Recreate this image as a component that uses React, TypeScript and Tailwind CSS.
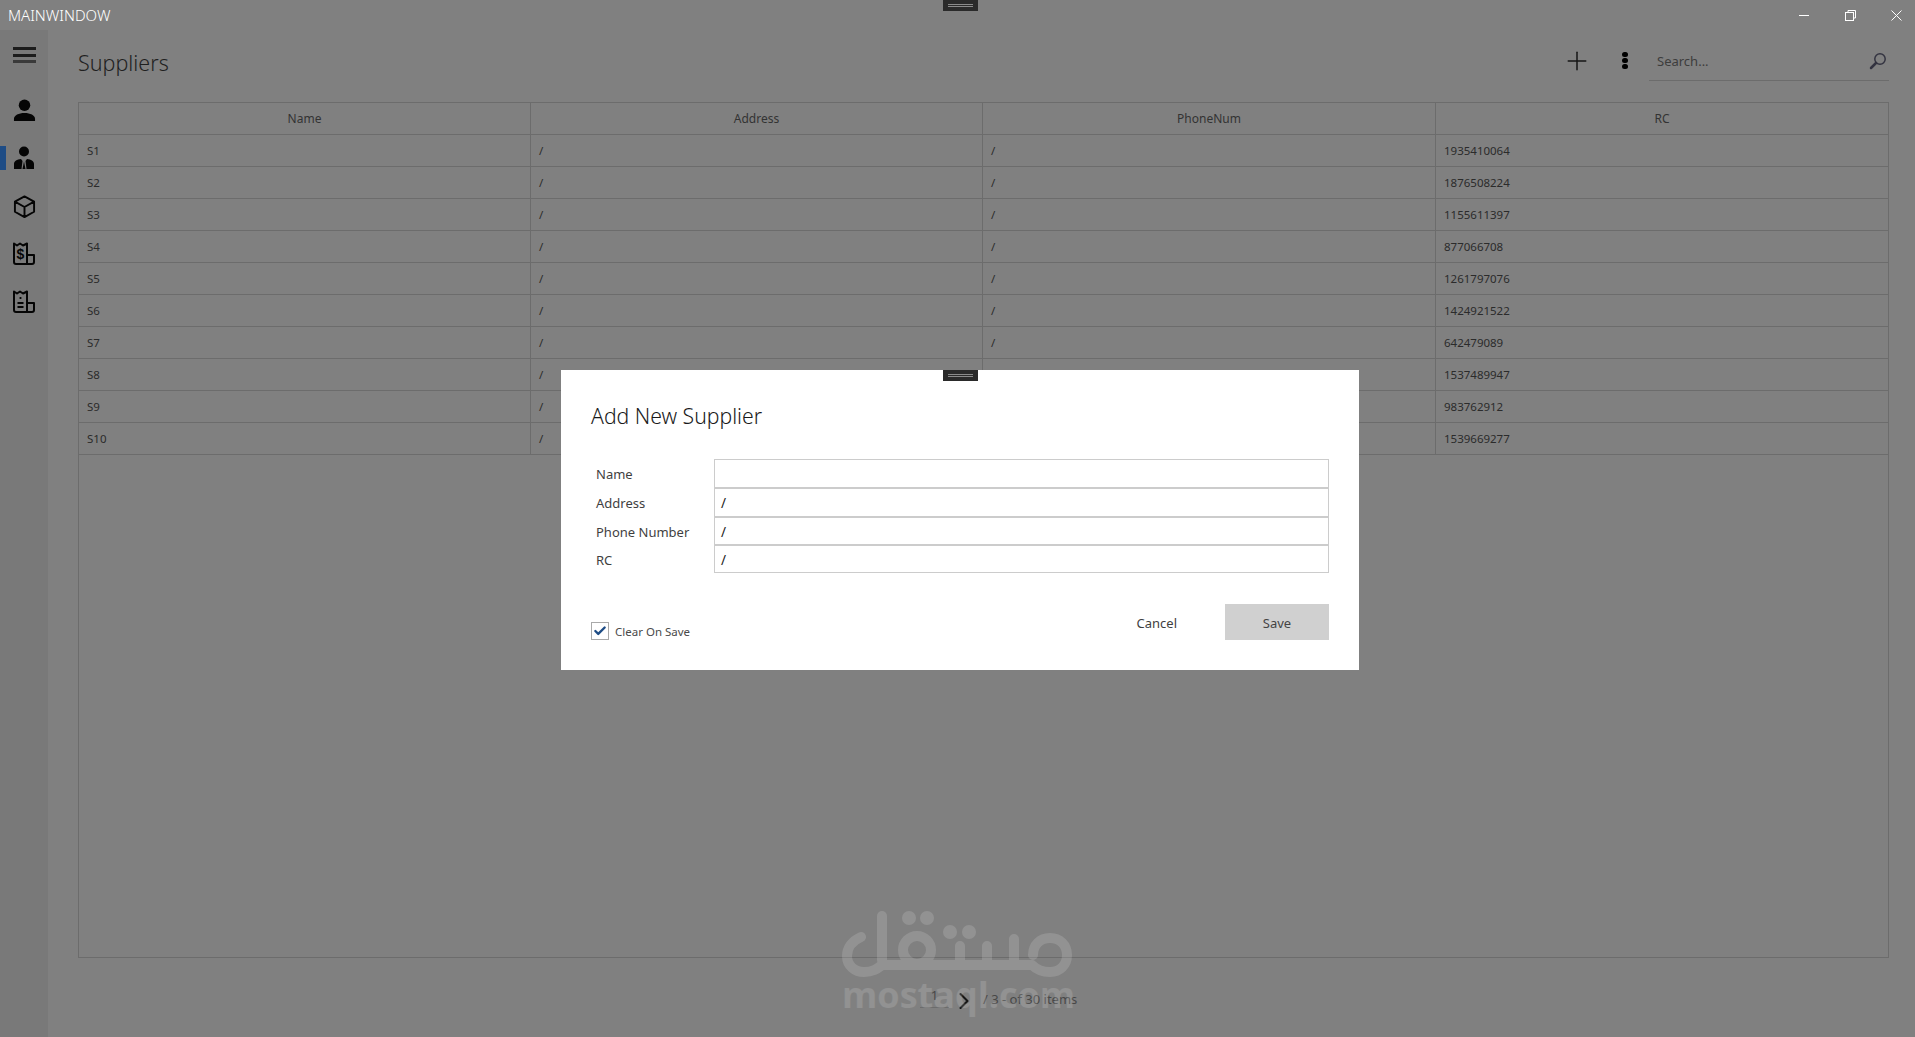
import { Check, ChevronRight, Plus } from 'lucide-react';

const suppliers = [
  { name: 'S1', rc: '1935410064' },
  { name: 'S2', rc: '1876508224' },
  { name: 'S3', rc: '1155611397' },
  { name: 'S4', rc: '877066708' },
  { name: 'S5', rc: '1261797076' },
  { name: 'S6', rc: '1424921522' },
  { name: 'S7', rc: '642479089' },
  { name: 'S8', rc: '1537489947' },
  { name: 'S9', rc: '983762912' },
  { name: 'S10', rc: '1539669277' },
];

const fields = [
  { label: 'Name', value: '', height: 'h-[29px]', offset: 'pt-[2px]' },
  { label: 'Address', value: '/', height: 'h-[29px]', offset: 'pt-[2px]' },
  { label: 'Phone Number', value: '/', height: 'h-[28px]', offset: 'pt-[3px]' },
  { label: 'RC', value: '/', height: 'h-[28px]', offset: 'pt-[3px]' },
];

function DragHandle({ className }: { className: string }) {
  return (
    <div className={`absolute left-[943px] flex h-[11px] w-[35px] flex-col items-center justify-center gap-[1px] bg-[#2a2a2a] ${className}`}>
      <div className="h-[1px] w-[25px] bg-[#8a8a8a]" />
      <div className="h-[1px] w-[25px] bg-[#8a8a8a]" />
    </div>
  );
}

function SuitIcon() {
  return (
    <svg width="22" height="24" viewBox="0 0 22 24" fill="#050505">
      <circle cx="11" cy="5.500" r="5" />
      <path d="M1 23v-5c0-3 3-4.500 7-5l1.500 2-1 8H1zM21 23v-5c0-3-3-4.500-7-5l-1.500 2 1 8H21zM11 15.500l1.500 7.500h-3z" />
    </svg>
  );
}

function ReceiptIcon({ dollar }: { dollar?: boolean }) {
  return (
    <svg width="24" height="24" viewBox="0 0 24 24" fill="none" stroke="#050505" strokeWidth="2">
      <path d="M2 1.500l3 2 3-2 3 2 4-2V22H4a2 2 0 0 1-2-2zM15 13h7v7a2 2 0 0 1-2 2h-5" strokeLinejoin="round" />
      {dollar ? (
        <text x="8.500" y="17" textAnchor="middle" fontSize="14" fontWeight="700" fill="#050505" stroke="none" fontFamily="Liberation Sans, sans-serif">$</text>
      ) : (
        <g strokeWidth="1.800">
          <path d="M8.500 7v2M5.500 13h6M5.500 17h6" />
        </g>
      )}
    </svg>
  );
}

function Sidebar() {
  return (
    <aside className="flex w-[48px] flex-none flex-col items-center bg-[#797979] pt-[17px]">
      <div className="flex h-[16px] w-[23px] flex-col justify-between">
        <div className="h-[3px] bg-[#1c1c1c]" />
        <div className="h-[3px] bg-[#1c1c1c]" />
        <div className="h-[3px] bg-[#3a3a3a]" />
      </div>
      <div className="mt-[34px] flex h-[26px] items-center">
        <svg width="23" height="23" viewBox="0 0 24 24" fill="#050505">
          <circle cx="12" cy="6.500" r="6" />
          <path d="M1 23v-2.500C1 17 6 14.500 12 14.500S23 17 23 20.500V23z" />
        </svg>
      </div>
      <div className="relative mt-[22px] flex h-[26px] w-full items-center justify-center">
        <div className="absolute left-0 top-[1px] h-[24px] w-[6px] bg-[#1e4c85]" />
        <SuitIcon />
      </div>
      <div className="mt-[22px] flex h-[26px] items-center">
        <svg width="23" height="23" viewBox="0 0 24 24" fill="none" stroke="#050505" strokeWidth="2" strokeLinejoin="round">
          <path d="M12 1.500l10 5.500v10.500l-10 5.500-10-5.500V7zM2 7l10 5.500L22 7M12 12.500V23" />
        </svg>
      </div>
      <div className="mt-[22px] flex h-[26px] items-center">
        <ReceiptIcon dollar />
      </div>
      <div className="mt-[22px] flex h-[26px] items-center">
        <ReceiptIcon />
      </div>
    </aside>
  );
}

function Toolbar() {
  return (
    <div className="flex h-[72px] items-start">
      <h1 className="mt-[15px] text-[21.500px] leading-[36px] font-light text-[#1f1f1f]">Suppliers</h1>
      <div className="ml-auto flex items-start">
        <Plus size={30} strokeWidth={1.200} className="mt-[16px] text-[#161616]" />
        <div className="ml-[30px] mr-[21px] mt-[22px] flex w-[6px] flex-col gap-[1px]">
          <div className="h-[5px] w-[6px] rounded-full bg-black" />
          <div className="h-[5px] w-[6px] rounded-full bg-black" />
          <div className="h-[5px] w-[6px] rounded-full bg-black" />
        </div>
        <div className="flex h-[51px] w-[240px] items-start justify-between border-b border-[#6c6c6c] pl-[8px] pr-[2px] pt-[21px]">
          <span className="text-[13px] leading-[20px] text-[#3d3d3d]">Search...</span>
          <svg width="18" height="18" viewBox="0 0 18 18" fill="none" className="mt-[1px]">
            <circle cx="11" cy="7" r="5.200" stroke="#333340" strokeWidth="1.500" />
            <path d="M7 11l-5 5" stroke="#333340" strokeWidth="2.500" strokeLinecap="round" />
          </svg>
        </div>
      </div>
    </div>
  );
}

function SuppliersTable() {
  return (
    <div className="min-h-0 flex-1 border border-[#6c6c6c]">
      <div className="grid h-[32px] grid-cols-[452px_452px_453px_1fr] border-b border-[#6c6c6c] text-center text-[12px] leading-[32px] text-[#333333]">
        <div className="border-r border-[#6c6c6c]">Name</div>
        <div className="border-r border-[#6c6c6c]">Address</div>
        <div className="border-r border-[#6c6c6c]">PhoneNum</div>
        <div>RC</div>
      </div>
      {suppliers.map((s) => (
        <div key={s.name} className="grid h-[32px] grid-cols-[452px_452px_453px_1fr] border-b border-[#6c6c6c] text-[11.500px] leading-[31px] text-[#2b2b2b]">
          <div className="border-r border-[#6c6c6c] pl-[8px]">{s.name}</div>
          <div className="border-r border-[#6c6c6c] pl-[8px]">/</div>
          <div className="border-r border-[#6c6c6c] pl-[8px]">/</div>
          <div className="pl-[8px]">{s.rc}</div>
        </div>
      ))}
    </div>
  );
}

function Pagination() {
  return (
    <div className="flex h-[79px] items-start pl-[842px] pt-[23px] text-[13px] text-[#474747]">
      <div className="h-[27px] w-[29px] border-b border-[#6c6c6c] pt-[5px] text-center">1</div>
      <ChevronRight size={28} strokeWidth={1.800} className="ml-[1px] mt-[6px] text-[#161616]" />
      <span className="ml-[5px] mt-[9px] whitespace-nowrap">/ 3 - of 30 items</span>
    </div>
  );
}

function Watermark() {
  return (
    <div className="pointer-events-none absolute left-[842px] top-[910px] flex w-[232px] flex-col">
      <svg width="232" height="72" viewBox="0 0 232 72" fill="none" stroke="#ffffff" className="opacity-[0.14]" strokeWidth="10" strokeLinecap="round" strokeLinejoin="round">
        <path d="M19 27C10 31 5 38 5 46c0 10 8 16 17 16 10 0 14-4 18-7h150c5 5 11 7 18 7 10 0 17-7 17-17s-7-17-17-17-17 7-17 17" />
        <path d="M40 6v44" />
        <circle cx="75" cy="40" r="14" />
        <path d="M118 36v17M145 36v17M172 29v24" />
        <g fill="#ffffff" stroke="none">
          <circle cx="67" cy="8" r="7" />
          <circle cx="85" cy="8" r="7" />
          <circle cx="108" cy="22" r="7" />
          <circle cx="127" cy="22" r="7" />
        </g>
      </svg>
      <span className="mt-[-7px] text-center font-['Open_Sans',sans-serif] text-[36px] leading-[40px] font-bold whitespace-nowrap text-white/14">mostaql.com</span>
    </div>
  );
}

function AddSupplierDialog() {
  return (
    <div className="absolute left-[561px] top-[370px] flex h-[300px] w-[798px] flex-col bg-white px-[30px] text-[#333333]">
      <h2 className="mt-[30px] text-[21.200px] leading-[32px] font-light text-[#1a1a1a]">Add New Supplier</h2>
      <div className="mt-[27px] flex flex-col">
        {fields.map((f) => (
          <div key={f.label} className={`grid grid-cols-[123px_1fr] items-center ${f.height}`}>
            <label className={`pl-[5px] text-[13px] text-[#3f3f3f] ${f.offset}`}>{f.label}</label>
            <div className={`flex h-full items-center border border-[#cccccc] pl-[6px] text-[13.500px] text-[#222222] ${f.offset}`}>{f.value}</div>
          </div>
        ))}
      </div>
      <div className="mt-[31px] flex items-start">
        <div className="mt-[18px] flex h-[18px] w-[18px] items-center justify-center border border-[#a9a9a9]">
          <Check size={14} strokeWidth={4} className="text-[#1e4c85]" />
        </div>
        <span className="ml-[6px] mt-[20px] text-[11.500px] leading-[16px] text-[#4a4a4a]">Clear On Save</span>
        <button className="ml-auto mt-[10px] text-[13px] text-[#3f3f3f]">Cancel</button>
        <button className="ml-[48px] h-[36px] w-[104px] bg-[#d0d0d0] pt-[3px] text-[13px] text-[#444444]">Save</button>
      </div>
    </div>
  );
}

export default function App() {
  return (
    <div className="relative flex h-screen w-full flex-col overflow-hidden bg-[#808080] font-['Noto_Sans',sans-serif]">
      <header className="flex h-[30px] flex-none items-center justify-between pl-[8px] text-white">
        <span className="text-[15px] font-light">MAINWINDOW</span>
        <div className="flex items-center pr-[13px]">
          <svg width="10" height="11" viewBox="0 0 10 11" stroke="#ffffff">
            <path d="M0 5.500h10" />
          </svg>
          <svg width="11" height="11" viewBox="0 0 11 11" fill="none" stroke="#ffffff" className="ml-[36px]">
            <rect x="0.500" y="2.500" width="8" height="8" />
            <path d="M3 2.500V0.500h7.500v7.500H8.500" />
          </svg>
          <svg width="11" height="11" viewBox="0 0 11 11" stroke="#ffffff" className="ml-[35px]">
            <path d="M0.500 0.500l10 10M10.500 0.500l-10 10" />
          </svg>
        </div>
      </header>
      <div className="flex min-h-0 flex-1">
        <Sidebar />
        <main className="flex min-w-0 flex-1 flex-col pl-[30px] pr-[26px]">
          <Toolbar />
          <SuppliersTable />
          <Pagination />
        </main>
      </div>
      <DragHandle className="top-0" />
      <Watermark />
      <AddSupplierDialog />
      <DragHandle className="top-[370px]" />
    </div>
  );
}
